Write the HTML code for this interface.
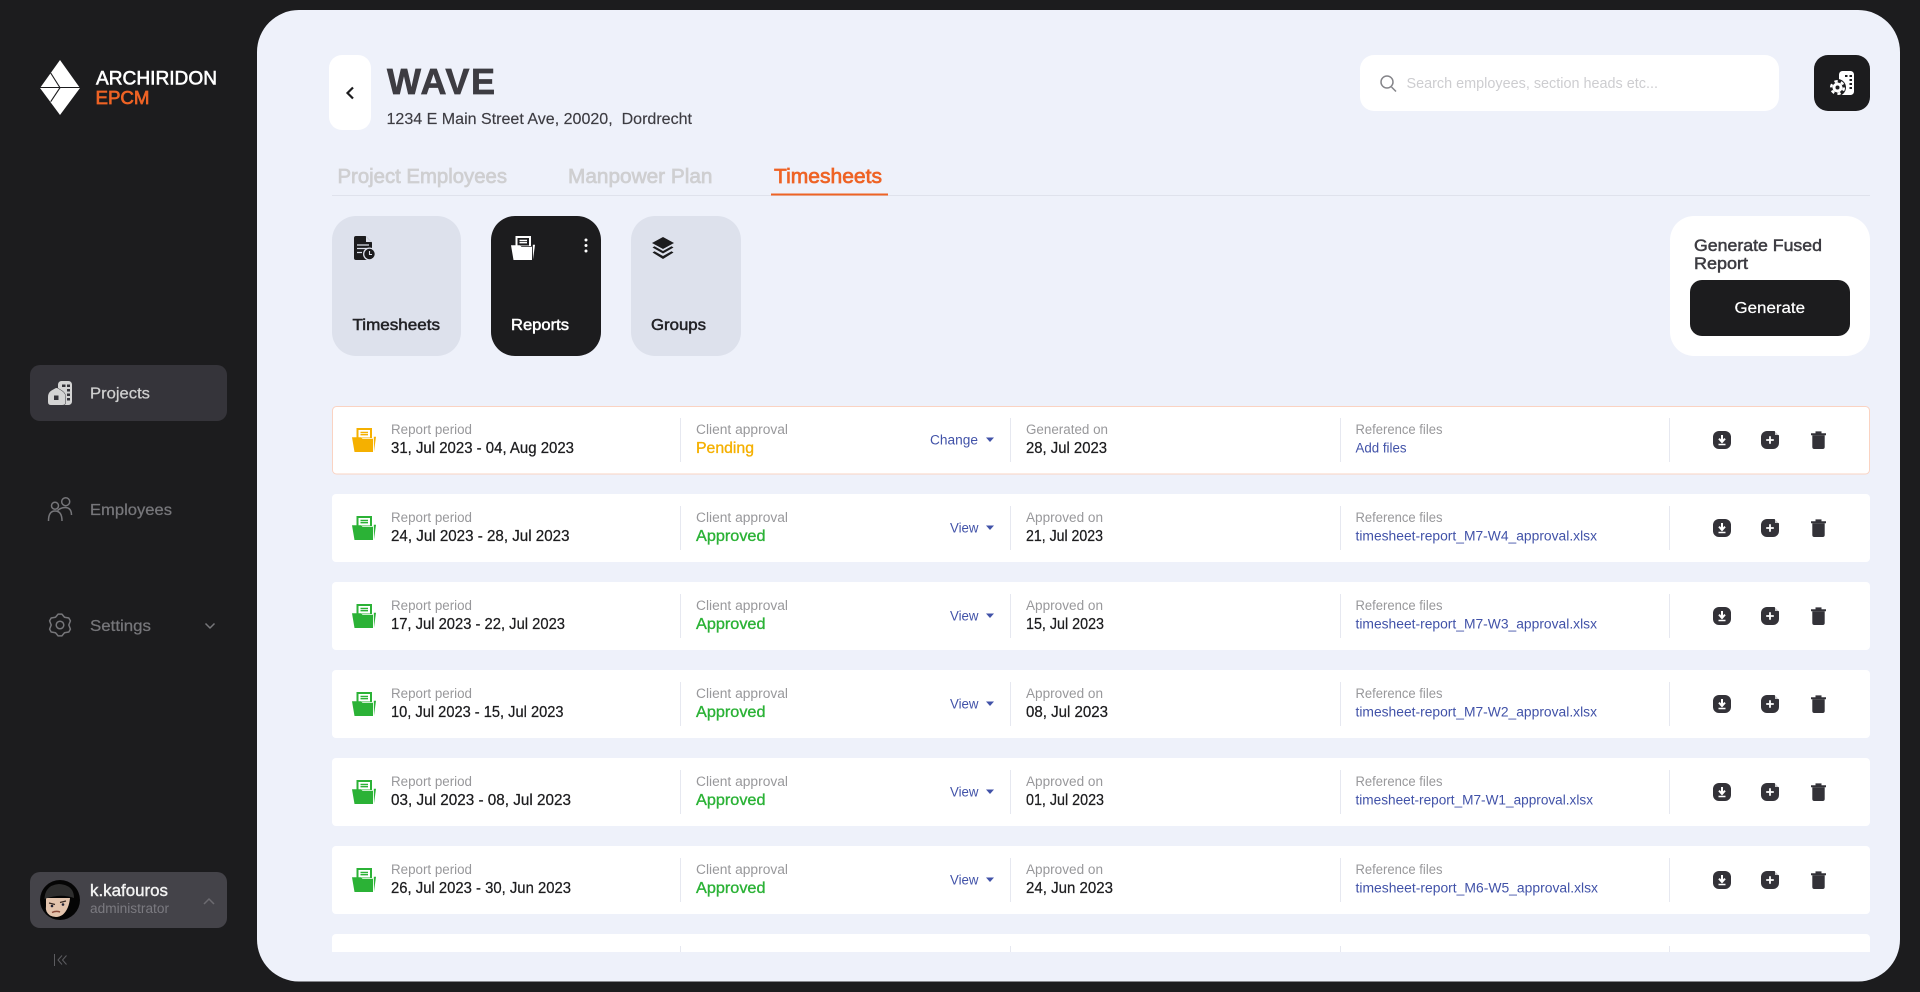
<!DOCTYPE html>
<html lang="en"><head><meta charset="utf-8"><title>Timesheets – WAVE</title>
<style>
html,body{margin:0;padding:0;background:#1c1c1e;width:1920px;height:992px;overflow:hidden}
svg{display:block}
text{font-family:"Liberation Sans",sans-serif;white-space:pre}
.m{stroke-width:.5}
.l{font-size:13.5px;fill:#98989b}
.d{font-size:15.5px;fill:#1c1c1e;stroke:#1c1c1e;stroke-width:.25}
.g{font-size:15.5px;fill:#2bb236;stroke:#2bb236;stroke-width:.35}
.a{font-size:13.5px;fill:#4152a8}
.r{font-size:13.5px;fill:#4152a8}
</style></head><body>
<svg xmlns="http://www.w3.org/2000/svg" width="1920" height="992" viewBox="0 0 1920 992">
<defs>
<symbol id="folder" viewBox="0 0 24 24" overflow="visible">
<path d="M4.5 0H20V10H4.5Z" fill="currentColor"/>
<path d="M6.5 2H18V9.500H6.5Z" fill="var(--b)"/>
<path d="M8.5 3.800H16V5.200H8.5ZM8.500 6H16V7.400H8.500Z" fill="currentColor"/>
<path d="M0 9.200H9L10.500 10.800H21V24H2.500Z" fill="currentColor"/>
<path d="M21.800 8.800H24L22 23.500Z" fill="currentColor"/>
</symbol>
<symbol id="dl" viewBox="0 0 18 18">
<rect width="18" height="18" rx="6" fill="#333238"/>
<path d="M9 4V10M6 7.600L9 11L12 7.600" fill="none" stroke="#fff" stroke-width="2"/>
<path d="M5.500 13.500H12.500" stroke="#fff" stroke-width="1.500"/>
</symbol>
<symbol id="add" viewBox="0 0 18 18">
<path d="M6 0H13.500L18 4.500V12A6 6 0 0 1 12 18H6A6 6 0 0 1 0 12V6A6 6 0 0 1 6 0Z" fill="#333238"/>
<path d="M14 0L18 4H14Z" fill="#fff" opacity=".75"/>
<path d="M9 5.200V12.800M5.200 9H12.800" stroke="#fff" stroke-width="1.800"/>
</symbol>
<symbol id="trash" viewBox="0 0 15 18">
<path d="M0 2.300H15V4.200H0ZM4.500 .4H10.500V2.500H4.500Z" fill="#333238"/>
<path d="M1.300 4.200H13.700V16A2 2 0 0 1 11.700 18H3.300A2 2 0 0 1 1.300 16Z" fill="#333238"/>
</symbol>
<symbol id="arr" viewBox="0 0 8 5"><path d="M0 0H8L4 4.500Z" fill="#4152a8"/></symbol>
<g id="tail">
<use href="#dl" x="1713" y="25" width="18" height="18"/>
<use href="#add" x="1761" y="25" width="18" height="18"/>
<use href="#trash" x="1811" y="25" width="15" height="18"/>
</g>
<g id="divs" fill="#e6e8f0">
<rect x="680" y="12" width="1" height="44"/>
<rect x="1010" y="12" width="1" height="44"/>
<rect x="1340" y="12" width="1" height="44"/>
<rect x="1669" y="12" width="1" height="44"/>
</g>
</defs>

<rect width="1920" height="992" fill="#1c1c1e"/>

<!-- sidebar logo -->
<path d="M60 60L80 88L60 115L40 88Z" fill="#fff"/>
<path d="M40 87.500H80M50.700 73L60 87.700L50.700 101.700" fill="none" stroke="#1c1c1e" stroke-width="1.100"/>
<text x="96" y="84.300" font-size="19" fill="#fff" stroke="#fff" stroke-width=".6" textLength="121" lengthAdjust="spacingAndGlyphs">ARCHIRIDON</text>
<text x="95.500" y="104" font-size="18" fill="#ee6325" stroke="#ee6325" stroke-width=".7" textLength="54" lengthAdjust="spacingAndGlyphs">EPCM</text>

<!-- nav -->
<rect x="30" y="365" width="197" height="56" rx="10" fill="#35343a"/>
<g>
<rect x="58" y="381" width="14" height="24" rx="3.500" fill="#d4d4d4"/>
<path d="M48 397Q48 392.500 51.500 390.500L55 388.500Q56.500 387.500 58 388.500L62 391Q65.500 393.500 65.500 397V402Q65.500 405 62 405H51Q48 405 48 402Z" fill="#d4d4d4" stroke="#35343a" stroke-width="1" paint-order="stroke"/>
<path d="M62 384.500h3.500v2.500h-3.500zM67 384.500h3v2.500h-3zM67 389h3v2.500h-3zM67 393.500h3v2.500h-3zM67 398h3v2.500h-3z" fill="#35343a"/>
<rect x="54" y="395.500" width="4.500" height="4.500" fill="#35343a"/>
</g>
<text x="90" y="398.500" font-size="15.500" fill="#cfcfcf" stroke="#cfcfcf" stroke-width=".25" textLength="60" lengthAdjust="spacingAndGlyphs">Projects</text>

<g fill="none" stroke="#76767a" stroke-width="1.500">
<circle cx="55" cy="505.700" r="3.500"/><circle cx="65.700" cy="501.700" r="4"/>
<path d="M48.500 521Q48.500 511 55 511Q62 511 62 521"/>
<path d="M57.500 510.500Q61 507.500 65 507.500Q71.500 507.500 71.500 515"/>
</g>
<text x="90" y="515" font-size="15.500" fill="#76767a" stroke="#76767a" stroke-width=".25" textLength="82" lengthAdjust="spacingAndGlyphs">Employees</text>

<g fill="none" stroke="#76767a" stroke-width="1.500" stroke-linejoin="round">
<path d="M61.900 614.150L64.500 617.270L68.800 617.950L70.400 620.900L68.800 625L70.400 629.100L68.800 632.050L64.500 632.730L61.900 635.850H58.100L55.500 632.730L51.200 632.050L49.600 629.100L51.200 625L49.600 620.900L51.200 617.950L55.500 617.270L58.100 614.150Z"/>
<circle cx="60" cy="625" r="3.800"/>
<path d="M205.500 623.500L210 628L214.500 623.500"/>
</g>
<text x="90" y="631" font-size="15.500" fill="#76767a" stroke="#76767a" stroke-width=".25" textLength="61" lengthAdjust="spacingAndGlyphs">Settings</text>

<!-- user -->
<rect x="30" y="872" width="197" height="56" rx="10" fill="#444349"/>
<circle cx="60" cy="900" r="20" fill="#050505"/>
<path d="M46 906Q45 912 50 915.500Q57 919 63 914.500Q69 909 70 898L46 898Z" fill="#e3c4ad"/>
<path d="M44.500 899Q45 885 59 884Q74 885 74 898Q60 893 44.500 899Z" fill="#2e2e2e"/>
<path d="M49 903l6 1.500M60 902.500l6-1.500" stroke="#3a2a22" stroke-width="1.200"/>
<circle cx="52" cy="906" r="1.300" fill="#223"/><circle cx="63" cy="904.500" r="1.300" fill="#223"/>
<path d="M52 912.500Q56 910.500 60 912" stroke="#8a4a3a" stroke-width="1.500" fill="none"/>
<text x="90" y="896" font-size="16.500" fill="#f2f2f2" stroke="#f2f2f2" stroke-width=".4" textLength="78" lengthAdjust="spacingAndGlyphs">k.kafouros</text>
<text x="90" y="913" font-size="13.500" fill="#7b7a80" textLength="79" lengthAdjust="spacingAndGlyphs">administrator</text>
<path d="M204 904L209 899L214 904" fill="none" stroke="#6c6b70" stroke-width="1.500"/>
<path d="M54.500 954V966" stroke="#5c5c60" stroke-width="1"/>
<path d="M62 955.500L58 960L62 964.500M66.500 955.500L62.500 960L66.500 964.500" fill="none" stroke="#5c5c60" stroke-width="1"/>

<!-- main panel -->
<rect x="257" y="10" width="1643" height="971.500" rx="42" fill="#eef1fa"/>

<!-- header -->
<rect x="329" y="55" width="42" height="75" rx="13" fill="#fff"/>
<path d="M353 87.500L347.500 93L353 98.500" fill="none" stroke="#1c1c1e" stroke-width="2.200"/>
<text x="387" y="94" font-size="36" font-weight="700" fill="#3d3c42" stroke="#3d3c42" stroke-width=".7" textLength="108" lengthAdjust="spacing">WAVE</text>
<text x="386.500" y="124" font-size="15.500" fill="#3d3c42" stroke="#3d3c42" stroke-width=".15" textLength="305.500" lengthAdjust="spacingAndGlyphs">1234 E Main Street Ave, 20020,  Dordrecht</text>

<rect x="1360" y="55" width="419" height="56" rx="14" fill="#fff"/>
<circle cx="1387" cy="82" r="6" fill="none" stroke="#85858a" stroke-width="1.500"/>
<path d="M1391.500 87L1396 91.500" stroke="#85858a" stroke-width="1.500"/>
<text x="1406.500" y="88" font-size="14.500" fill="#cdcdd0" textLength="251.500" lengthAdjust="spacingAndGlyphs">Search employees, section heads etc...</text>

<rect x="1814" y="55" width="56" height="56" rx="14" fill="#1c1c1e"/>
<g>
<rect x="1839" y="71" width="15" height="24" rx="3.500" fill="#fff"/>
<circle cx="1837.500" cy="87.500" r="8.500" fill="#1c1c1e"/>
<circle cx="1837.500" cy="87.500" r="5" fill="#fff"/>
<circle cx="1837.500" cy="87.500" r="6.300" fill="none" stroke="#fff" stroke-width="2.500" stroke-dasharray="3.300 3.300"/>
<circle cx="1837.500" cy="87.500" r="2" fill="#1c1c1e"/>
<path d="M1845 75h2.500v2h-2.500zM1849.500 75h2.500v2h-2.500zM1849.500 79h2.500v2h-2.500zM1849.500 83h2.500v2h-2.500zM1849.500 87h2.500v2h-2.500z" fill="#1c1c1e"/>
</g>

<!-- tabs -->
<text x="337.500" y="183" font-size="20" fill="#cfcfd1" stroke="#cfcfd1" stroke-width=".7" textLength="169.500" lengthAdjust="spacingAndGlyphs">Project Employees</text>
<text x="568" y="183" font-size="20" fill="#cfcfd1" stroke="#cfcfd1" stroke-width=".7" textLength="144.500" lengthAdjust="spacingAndGlyphs">Manpower Plan</text>
<text x="774" y="183" font-size="20" fill="#ee6325" stroke="#ee6325" stroke-width=".7" textLength="108" lengthAdjust="spacingAndGlyphs">Timesheets</text>
<rect x="332" y="195" width="1538" height="1" fill="#dfe2ec"/>
<rect x="771" y="193.500" width="117" height="2" fill="#ee6325"/>

<!-- cards -->
<rect x="332" y="216" width="129" height="140" rx="24" fill="#dde1ec"/>
<rect x="491" y="216" width="110" height="140" rx="24" fill="#1c1c1e"/>
<rect x="631" y="216" width="110" height="140" rx="24" fill="#dde1ec"/>

<path d="M356 236H365.500L372 242.500V258A2 2 0 0 1 370 260H356A2 2 0 0 1 354 258V238A2 2 0 0 1 356 236Z" fill="#1c1c1e"/>
<path d="M366 236.500V242H371.500Z" fill="#dde1ec"/>
<path d="M357 245H369M357 248.500H369M357 252.500H362" stroke="#dde1ec" stroke-width="1.200"/>
<circle cx="369.500" cy="254" r="6.500" fill="#dde1ec"/>
<circle cx="369.500" cy="254" r="5.200" fill="#1c1c1e"/>
<path d="M369.500 251V254.500H372" fill="none" stroke="#dde1ec" stroke-width="1.100"/>
<text x="352.500" y="330" font-size="16" fill="#222226" stroke="#222226" class="m" textLength="87.500" lengthAdjust="spacingAndGlyphs">Timesheets</text>

<use href="#folder" x="511" y="236" width="24" height="24" style="color:#fff;--b:#1c1c1e"/>
<circle cx="586" cy="240" r="1.500" fill="#fff"/><circle cx="586" cy="245.500" r="1.500" fill="#fff"/><circle cx="586" cy="251" r="1.500" fill="#fff"/>
<text x="511" y="330" font-size="16" fill="#fff" stroke="#fff" class="m" textLength="58" lengthAdjust="spacingAndGlyphs">Reports</text>

<path d="M663 237L674 243L663 249L652 243Z" fill="#1c1c1e"/>
<path d="M652.500 247.500L654.500 246.300L663 251L671.500 246.300L673.500 247.500L663 253.500Z" fill="#1c1c1e"/>
<path d="M652.500 252.500L654.500 251.300L663 256L671.500 251.300L673.500 252.500L663 259Z" fill="#1c1c1e"/>
<text x="651" y="330" font-size="16" fill="#222226" stroke="#222226" class="m" textLength="55" lengthAdjust="spacingAndGlyphs">Groups</text>

<rect x="1670" y="216" width="200" height="140" rx="24" fill="#fff"/>
<text x="1694" y="251" font-size="16.500" fill="#3d3c42" stroke="#3d3c42" class="m" textLength="128" lengthAdjust="spacingAndGlyphs">Generate Fused</text>
<text x="1694" y="269" font-size="16.500" fill="#3d3c42" stroke="#3d3c42" class="m" textLength="54" lengthAdjust="spacingAndGlyphs">Report</text>
<rect x="1690" y="280" width="160" height="56" rx="12" fill="#1c1c1e"/>
<text x="1734.500" y="313" font-size="15.500" fill="#fff" stroke="#fff" stroke-width=".2" textLength="70.500" lengthAdjust="spacingAndGlyphs">Generate</text>

<!-- row 1 -->
<g transform="translate(0,406)">
<rect x="332.500" y=".5" width="1537" height="67.500" rx="4" fill="#fff" stroke="#fad3c2"/>
<use href="#divs"/>
<use href="#folder" x="352" y="22" width="24" height="24" style="color:#f5b000;--b:#fff"/>
<text class="l" x="391" y="28" textLength="81" lengthAdjust="spacingAndGlyphs">Report period</text>
<text class="d" x="391" y="47" textLength="183" lengthAdjust="spacingAndGlyphs">31, Jul 2023 - 04, Aug 2023</text>
<text class="l" x="696" y="28" textLength="92" lengthAdjust="spacingAndGlyphs">Client approval</text>
<text class="g" x="696" y="47" textLength="58" lengthAdjust="spacingAndGlyphs" style="fill:#f5b000;stroke:#f5b000">Pending</text>
<text class="a" x="930" y="38.500" textLength="48" lengthAdjust="spacingAndGlyphs">Change</text>
<use href="#arr" x="986" y="31.500" width="8" height="5"/>
<text class="l" x="1026" y="28" textLength="82" lengthAdjust="spacingAndGlyphs">Generated on</text>
<text class="d" x="1026" y="47" textLength="81" lengthAdjust="spacingAndGlyphs">28, Jul 2023</text>
<text class="l" x="1355.500" y="28" textLength="87" lengthAdjust="spacingAndGlyphs">Reference files</text>
<text class="r" x="1355.500" y="46.500" textLength="51" lengthAdjust="spacingAndGlyphs">Add files</text>
<use href="#tail"/>
</g>

<!-- row 2 -->
<g transform="translate(0,494)">
<rect x="332" width="1538" height="68" rx="4" fill="#fff"/>
<use href="#divs"/>
<use href="#folder" x="352" y="22" width="24" height="24" style="color:#2bb236;--b:#fff"/>
<text class="l" x="391" y="28" textLength="81" lengthAdjust="spacingAndGlyphs">Report period</text>
<text class="d" x="391" y="47" textLength="178.500" lengthAdjust="spacingAndGlyphs">24, Jul 2023 - 28, Jul 2023</text>
<text class="l" x="696" y="28" textLength="92" lengthAdjust="spacingAndGlyphs">Client approval</text>
<text class="g" x="696" y="47" textLength="69.500" lengthAdjust="spacingAndGlyphs">Approved</text>
<text class="a" x="950" y="38.500" textLength="28.500" lengthAdjust="spacingAndGlyphs">View</text>
<use href="#arr" x="986" y="31.500" width="8" height="5"/>
<text class="l" x="1026" y="28" textLength="77" lengthAdjust="spacingAndGlyphs">Approved on</text>
<text class="d" x="1026" y="47" textLength="77" lengthAdjust="spacingAndGlyphs">21, Jul 2023</text>
<text class="l" x="1355.500" y="28" textLength="87" lengthAdjust="spacingAndGlyphs">Reference files</text>
<text class="r" x="1355.500" y="46.500" textLength="241.500" lengthAdjust="spacingAndGlyphs">timesheet-report_M7-W4_approval.xlsx</text>
<use href="#tail"/>
</g>

<!-- row 3 -->
<g transform="translate(0,582)">
<rect x="332" width="1538" height="68" rx="4" fill="#fff"/>
<use href="#divs"/>
<use href="#folder" x="352" y="22" width="24" height="24" style="color:#2bb236;--b:#fff"/>
<text class="l" x="391" y="28" textLength="81" lengthAdjust="spacingAndGlyphs">Report period</text>
<text class="d" x="391" y="47" textLength="174" lengthAdjust="spacingAndGlyphs">17, Jul 2023 - 22, Jul 2023</text>
<text class="l" x="696" y="28" textLength="92" lengthAdjust="spacingAndGlyphs">Client approval</text>
<text class="g" x="696" y="47" textLength="69.500" lengthAdjust="spacingAndGlyphs">Approved</text>
<text class="a" x="950" y="38.500" textLength="28.500" lengthAdjust="spacingAndGlyphs">View</text>
<use href="#arr" x="986" y="31.500" width="8" height="5"/>
<text class="l" x="1026" y="28" textLength="77" lengthAdjust="spacingAndGlyphs">Approved on</text>
<text class="d" x="1026" y="47" textLength="78" lengthAdjust="spacingAndGlyphs">15, Jul 2023</text>
<text class="l" x="1355.500" y="28" textLength="87" lengthAdjust="spacingAndGlyphs">Reference files</text>
<text class="r" x="1355.500" y="46.500" textLength="241.500" lengthAdjust="spacingAndGlyphs">timesheet-report_M7-W3_approval.xlsx</text>
<use href="#tail"/>
</g>

<!-- row 4 -->
<g transform="translate(0,670)">
<rect x="332" width="1538" height="68" rx="4" fill="#fff"/>
<use href="#divs"/>
<use href="#folder" x="352" y="22" width="24" height="24" style="color:#2bb236;--b:#fff"/>
<text class="l" x="391" y="28" textLength="81" lengthAdjust="spacingAndGlyphs">Report period</text>
<text class="d" x="391" y="47" textLength="172.500" lengthAdjust="spacingAndGlyphs">10, Jul 2023 - 15, Jul 2023</text>
<text class="l" x="696" y="28" textLength="92" lengthAdjust="spacingAndGlyphs">Client approval</text>
<text class="g" x="696" y="47" textLength="69.500" lengthAdjust="spacingAndGlyphs">Approved</text>
<text class="a" x="950" y="38.500" textLength="28.500" lengthAdjust="spacingAndGlyphs">View</text>
<use href="#arr" x="986" y="31.500" width="8" height="5"/>
<text class="l" x="1026" y="28" textLength="77" lengthAdjust="spacingAndGlyphs">Approved on</text>
<text class="d" x="1026" y="47" textLength="82" lengthAdjust="spacingAndGlyphs">08, Jul 2023</text>
<text class="l" x="1355.500" y="28" textLength="87" lengthAdjust="spacingAndGlyphs">Reference files</text>
<text class="r" x="1355.500" y="46.500" textLength="241.500" lengthAdjust="spacingAndGlyphs">timesheet-report_M7-W2_approval.xlsx</text>
<use href="#tail"/>
</g>

<!-- row 5 -->
<g transform="translate(0,758)">
<rect x="332" width="1538" height="68" rx="4" fill="#fff"/>
<use href="#divs"/>
<use href="#folder" x="352" y="22" width="24" height="24" style="color:#2bb236;--b:#fff"/>
<text class="l" x="391" y="28" textLength="81" lengthAdjust="spacingAndGlyphs">Report period</text>
<text class="d" x="391" y="47" textLength="180" lengthAdjust="spacingAndGlyphs">03, Jul 2023 - 08, Jul 2023</text>
<text class="l" x="696" y="28" textLength="92" lengthAdjust="spacingAndGlyphs">Client approval</text>
<text class="g" x="696" y="47" textLength="69.500" lengthAdjust="spacingAndGlyphs">Approved</text>
<text class="a" x="950" y="38.500" textLength="28.500" lengthAdjust="spacingAndGlyphs">View</text>
<use href="#arr" x="986" y="31.500" width="8" height="5"/>
<text class="l" x="1026" y="28" textLength="77" lengthAdjust="spacingAndGlyphs">Approved on</text>
<text class="d" x="1026" y="47" textLength="78" lengthAdjust="spacingAndGlyphs">01, Jul 2023</text>
<text class="l" x="1355.500" y="28" textLength="87" lengthAdjust="spacingAndGlyphs">Reference files</text>
<text class="r" x="1355.500" y="46.500" textLength="237.500" lengthAdjust="spacingAndGlyphs">timesheet-report_M7-W1_approval.xlsx</text>
<use href="#tail"/>
</g>

<!-- row 6 -->
<g transform="translate(0,846)">
<rect x="332" width="1538" height="68" rx="4" fill="#fff"/>
<use href="#divs"/>
<use href="#folder" x="352" y="22" width="24" height="24" style="color:#2bb236;--b:#fff"/>
<text class="l" x="391" y="28" textLength="81" lengthAdjust="spacingAndGlyphs">Report period</text>
<text class="d" x="391" y="47" textLength="180" lengthAdjust="spacingAndGlyphs">26, Jul 2023 - 30, Jun 2023</text>
<text class="l" x="696" y="28" textLength="92" lengthAdjust="spacingAndGlyphs">Client approval</text>
<text class="g" x="696" y="47" textLength="69.500" lengthAdjust="spacingAndGlyphs">Approved</text>
<text class="a" x="950" y="38.500" textLength="28.500" lengthAdjust="spacingAndGlyphs">View</text>
<use href="#arr" x="986" y="31.500" width="8" height="5"/>
<text class="l" x="1026" y="28" textLength="77" lengthAdjust="spacingAndGlyphs">Approved on</text>
<text class="d" x="1026" y="47" textLength="87" lengthAdjust="spacingAndGlyphs">24, Jun 2023</text>
<text class="l" x="1355.500" y="28" textLength="87" lengthAdjust="spacingAndGlyphs">Reference files</text>
<text class="r" x="1355.500" y="46.500" textLength="242.500" lengthAdjust="spacingAndGlyphs">timesheet-report_M6-W5_approval.xlsx</text>
<use href="#tail"/>
</g>

<!-- row 7 clipped -->
<path d="M332 952V938A4 4 0 0 1 336 934H1866A4 4 0 0 1 1870 938V952Z" fill="#fff"/>
<path d="M680 946h1v6H680zM1010 946h1v6H1010zM1340 946h1v6H1340zM1669 946h1v6H1669z" fill="#e6e8f0"/>
</svg>
</body></html>
